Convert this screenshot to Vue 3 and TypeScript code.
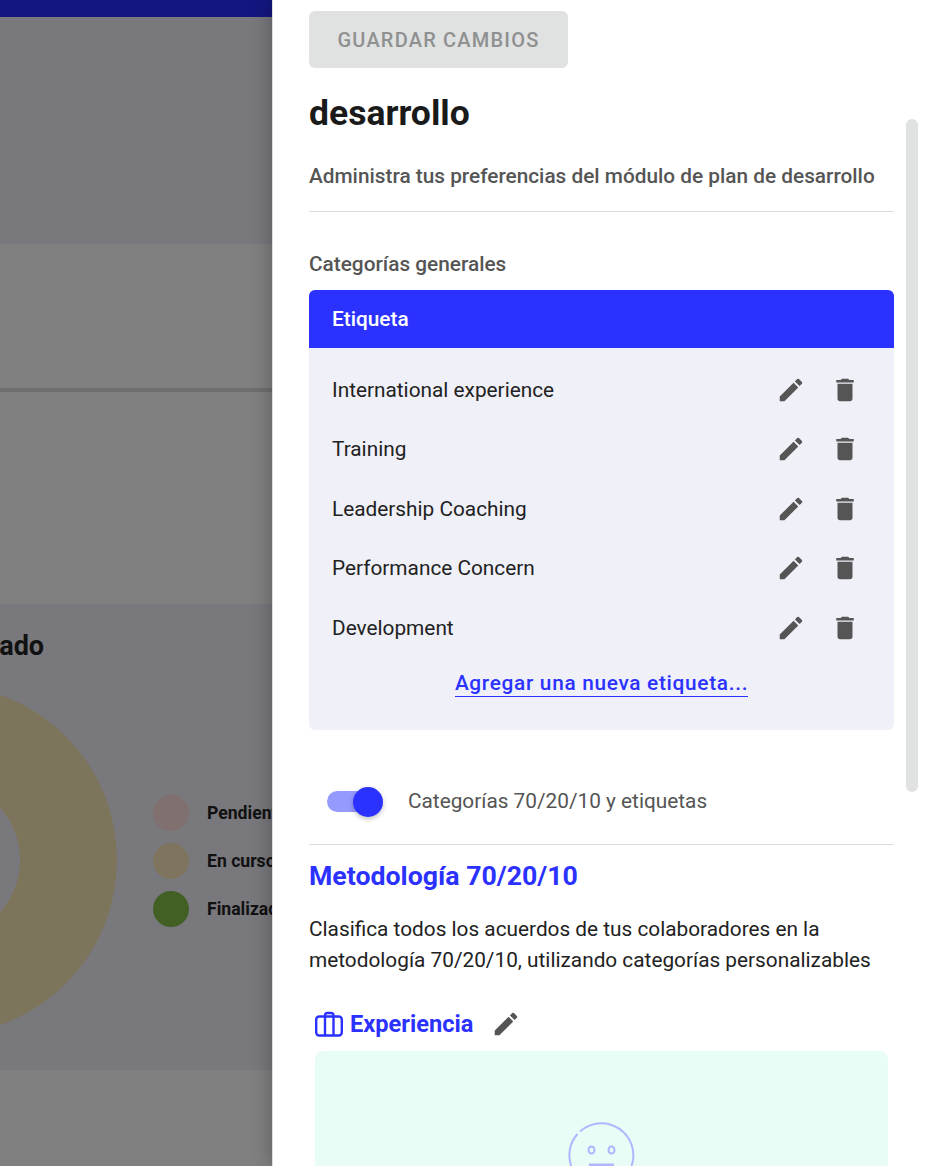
<script setup lang="ts">
const etiquetas: string[] = [
  'International experience',
  'Training',
  'Leadership Coaching',
  'Performance Concern',
  'Development',
]

const leyenda = [
  { label: 'Pendiente', color: '#80706f' },
  { label: 'En curso', color: '#7f755f' },
  { label: 'Finalizado', color: '#426023' },
]

const pencil = 'M3 17.25V21h3.75L17.81 9.94l-3.75-3.75L3 17.25zM20.71 7.04a.996.996 0 0 0 0-1.41l-2.34-2.34a.996.996 0 0 0-1.41 0l-1.83 1.83 3.75 3.75 1.83-1.83z'
const trash = 'M6 19c0 1.1.9 2 2 2h8c1.1 0 2-.9 2-2V7H6v12zM19 4h-3.5l-1-1h-5l-1 1H5v2h14V4z'
</script>

<template>
  <div class="page">
    <div class="backdrop">
      <div class="topbar"></div>
      <div class="band dim" style="height: 227px"></div>
      <div class="band" style="height: 144px"></div>
      <div class="rule"></div>
      <div class="band" style="height: 212px"></div>
      <section class="chart-card">
        <h2>Estado</h2>
        <div class="chart-row">
          <svg class="donut" width="350" height="350" viewBox="0 0 350 350">
            <circle cx="175" cy="175" r="126.5" fill="none" stroke="#7d745c" stroke-width="97" />
          </svg>
          <ul class="legend">
            <li v-for="item in leyenda" :key="item.label">
              <span class="dot" :style="{ background: item.color }"></span>
              <span>{{ item.label }}</span>
            </li>
          </ul>
        </div>
      </section>
      <div class="band grow"></div>
    </div>

    <aside class="drawer">
      <div class="actions">
        <button class="save" disabled>GUARDAR CAMBIOS</button>
      </div>
      <div class="scrollbar"></div>
      <div class="scroll">
        <div class="content">
          <h1>Ajustes generales del plan de desarrollo</h1>
          <p class="subtitle">Administra tus preferencias del módulo de plan de desarrollo</p>
          <hr />
          <h3>Categorías generales</h3>
          <div class="table">
            <div class="table-head">Etiqueta</div>
            <div class="table-body">
              <div v-for="et in etiquetas" :key="et" class="row">
                <span>{{ et }}</span>
                <div class="row-icons">
                  <svg width="30" height="30" viewBox="0 0 24 24"><path :d="pencil" /></svg>
                  <svg width="30" height="30" viewBox="0 0 24 24"><path :d="trash" /></svg>
                </div>
              </div>
              <a class="add">Agregar una nueva etiqueta...</a>
            </div>
          </div>
          <div class="toggle-row">
            <span class="toggle"><span class="knob"></span></span>
            <span>Categorías 70/20/10 y etiquetas</span>
          </div>
          <hr class="tight" />
          <h2 class="method">Metodología 70/20/10</h2>
          <p class="desc">Clasifica todos los acuerdos de tus colaboradores en la metodología 70/20/10, utilizando categorías personalizables</p>
          <div class="cat-title">
            <svg class="case" width="30" height="30" viewBox="0 0 30 30" fill="none" stroke="#2b32ff" stroke-width="2.4">
              <rect x="2.2" y="7.5" width="25.6" height="19" rx="3" />
              <path d="M11 26.5V6.5a2.5 2.5 0 0 1 2.5-2.5h3.5a2.5 2.5 0 0 1 2.5 2.5v20" />
            </svg>
            <span>Experiencia</span>
            <svg class="cat-edit" width="30" height="30" viewBox="0 0 24 24"><path :d="pencil" /></svg>
          </div>
          <div class="empty">
            <svg width="70" height="70" viewBox="0 0 70 70" fill="none" stroke="#b2b5ff" stroke-width="2">
              <path d="M13 10.5A32 32 0 1 1 10.5 13" />
              <ellipse cx="24.5" cy="29" rx="3" ry="3.6" />
              <ellipse cx="44.5" cy="29" rx="3" ry="3.6" />
              <path d="M22 44h25" stroke-width="3" />
            </svg>
          </div>
        </div>
      </div>
    </aside>
  </div>
</template>

<style scoped>
.page {
  display: flex;
  width: 944px;
  height: 1166px;
  overflow: hidden;
  font-family: Roboto, "Liberation Sans", sans-serif;
}

.backdrop {
  width: 272px;
  flex-shrink: 0;
  display: flex;
  flex-direction: column;
  overflow: hidden;
  background: #808080;
}

.topbar {
  height: 17px;
  background: #141680;
}

.band.dim {
  background: #79787d;
}

.band.grow {
  flex: 1;
}

.rule {
  height: 4px;
  background: #6f6f6f;
}

.chart-card {
  height: 466px;
  background: #79787d;
  flex-shrink: 0;
  padding-top: 24px;
  box-sizing: border-box;
}

.chart-card h2 {
  margin: 0 0 0 -39px;
  font-size: 27px;
  line-height: 36px;
  font-weight: 700;
  color: #111;
}

.chart-row {
  display: flex;
  align-items: center;
  gap: 36px;
  margin-left: -233px;
  margin-top: 21px;
}

.donut {
  flex-shrink: 0;
}

.legend {
  list-style: none;
  margin: 2px 0 0;
  padding: 0;
  display: flex;
  flex-direction: column;
  gap: 12px;
  font-size: 17.6px;
  font-weight: 700;
  color: #111;
  white-space: nowrap;
}

.legend li {
  display: flex;
  align-items: center;
  gap: 18px;
}

.dot {
  width: 36px;
  height: 36px;
  border-radius: 50%;
  flex-shrink: 0;
}

.drawer {
  position: relative;
  flex: 1;
  min-width: 0;
  display: flex;
  flex-direction: column;
  background: #fff;
  border-left: 1px solid #dcdcdc;
  box-shadow: 0 0 20px rgba(0, 0, 0, 0.3);
}

.actions {
  height: 85px;
  flex-shrink: 0;
  padding: 11px 0 0 36px;
  box-sizing: border-box;
}

.save {
  width: 259px;
  height: 57px;
  border: none;
  border-radius: 6px;
  background: #e0e1e1;
  color: #8f9090;
  font-family: inherit;
  font-size: 20px;
  font-weight: 500;
  letter-spacing: 1.2px;
}

.scrollbar {
  position: absolute;
  left: 633px;
  top: 119px;
  width: 12px;
  height: 673px;
  border-radius: 6px;
  background: #e0e1e1;
}

.scroll {
  flex: 1;
  overflow: hidden;
}

.content {
  width: 585px;
  margin-left: 36px;
  margin-top: -44px;
}

h1 {
  margin: 0;
  font-size: 35.5px;
  line-height: 48px;
  font-weight: 700;
  color: #1a1a1a;
}

.subtitle {
  margin: 25px 0 0;
  font-size: 20.8px;
  line-height: 28px;
  font-weight: 500;
  color: #555;
}

hr {
  margin: 21px 0 0;
  border: none;
  border-top: 1px solid #dedede;
}

h3 {
  margin: 38px 0 0;
  font-size: 20.8px;
  line-height: 28px;
  font-weight: 500;
  color: #555;
}

.table {
  margin-top: 12px;
}

.table-head {
  height: 58px;
  display: flex;
  align-items: center;
  padding-left: 23px;
  background: #2b32ff;
  border-radius: 6px 6px 0 0;
  color: #fff;
  font-size: 20.8px;
  font-weight: 500;
}

.table-body {
  height: 382px;
  box-sizing: border-box;
  padding-top: 12px;
  background: #eff0f8;
  border-radius: 0 0 6px 6px;
  text-align: center;
}

.row {
  height: 59.5px;
  display: flex;
  align-items: center;
  justify-content: space-between;
  padding: 0 34px 0 23px;
  font-size: 20.8px;
  color: #222;
}

.row-icons {
  display: flex;
  gap: 24px;
}

.row-icons svg,
.cat-edit {
  fill: #555;
}

.add {
  display: inline-block;
  margin-top: 12px;
  font-size: 20.8px;
  line-height: 26px;
  font-weight: 500;
  letter-spacing: 0.7px;
  color: #2b32ff;
  border-bottom: 1px solid #2b32ff;
}

.toggle-row {
  display: flex;
  align-items: center;
  gap: 31px;
  margin-top: 52px;
  padding-left: 18px;
  height: 38px;
  font-size: 20.8px;
  color: #555;
}

.toggle {
  position: relative;
  width: 50px;
  height: 21px;
  border-radius: 11px;
  background: #959aff;
}

.knob {
  position: absolute;
  right: -6px;
  top: -4px;
  width: 30px;
  height: 30px;
  border-radius: 50%;
  background: #2b32ff;
  box-shadow: 0 2px 5px rgba(0, 0, 0, 0.25);
}

hr.tight {
  margin-top: 24px;
}

.method {
  margin: 13px 0 0;
  font-size: 26.7px;
  line-height: 36px;
  font-weight: 700;
  color: #2b32ff;
}

.desc {
  margin: 20px 0 0;
  font-size: 20.8px;
  line-height: 31px;
  color: #222;
}

.cat-title {
  display: flex;
  align-items: center;
  margin-top: 33px;
  padding-left: 5px;
  font-size: 23.6px;
  font-weight: 700;
  color: #2b32ff;
}

.case {
  margin-right: 6px;
}

.cat-edit {
  margin-left: 18px;
}

.empty {
  margin: 12px 6px 0;
  height: 300px;
  background: #e8fdf5;
  border-radius: 8px;
  display: flex;
  justify-content: center;
  padding-top: 70px;
  box-sizing: border-box;
}
</style>

<style>
html,
body {
  margin: 0;
  background: #fff;
}
</style>
